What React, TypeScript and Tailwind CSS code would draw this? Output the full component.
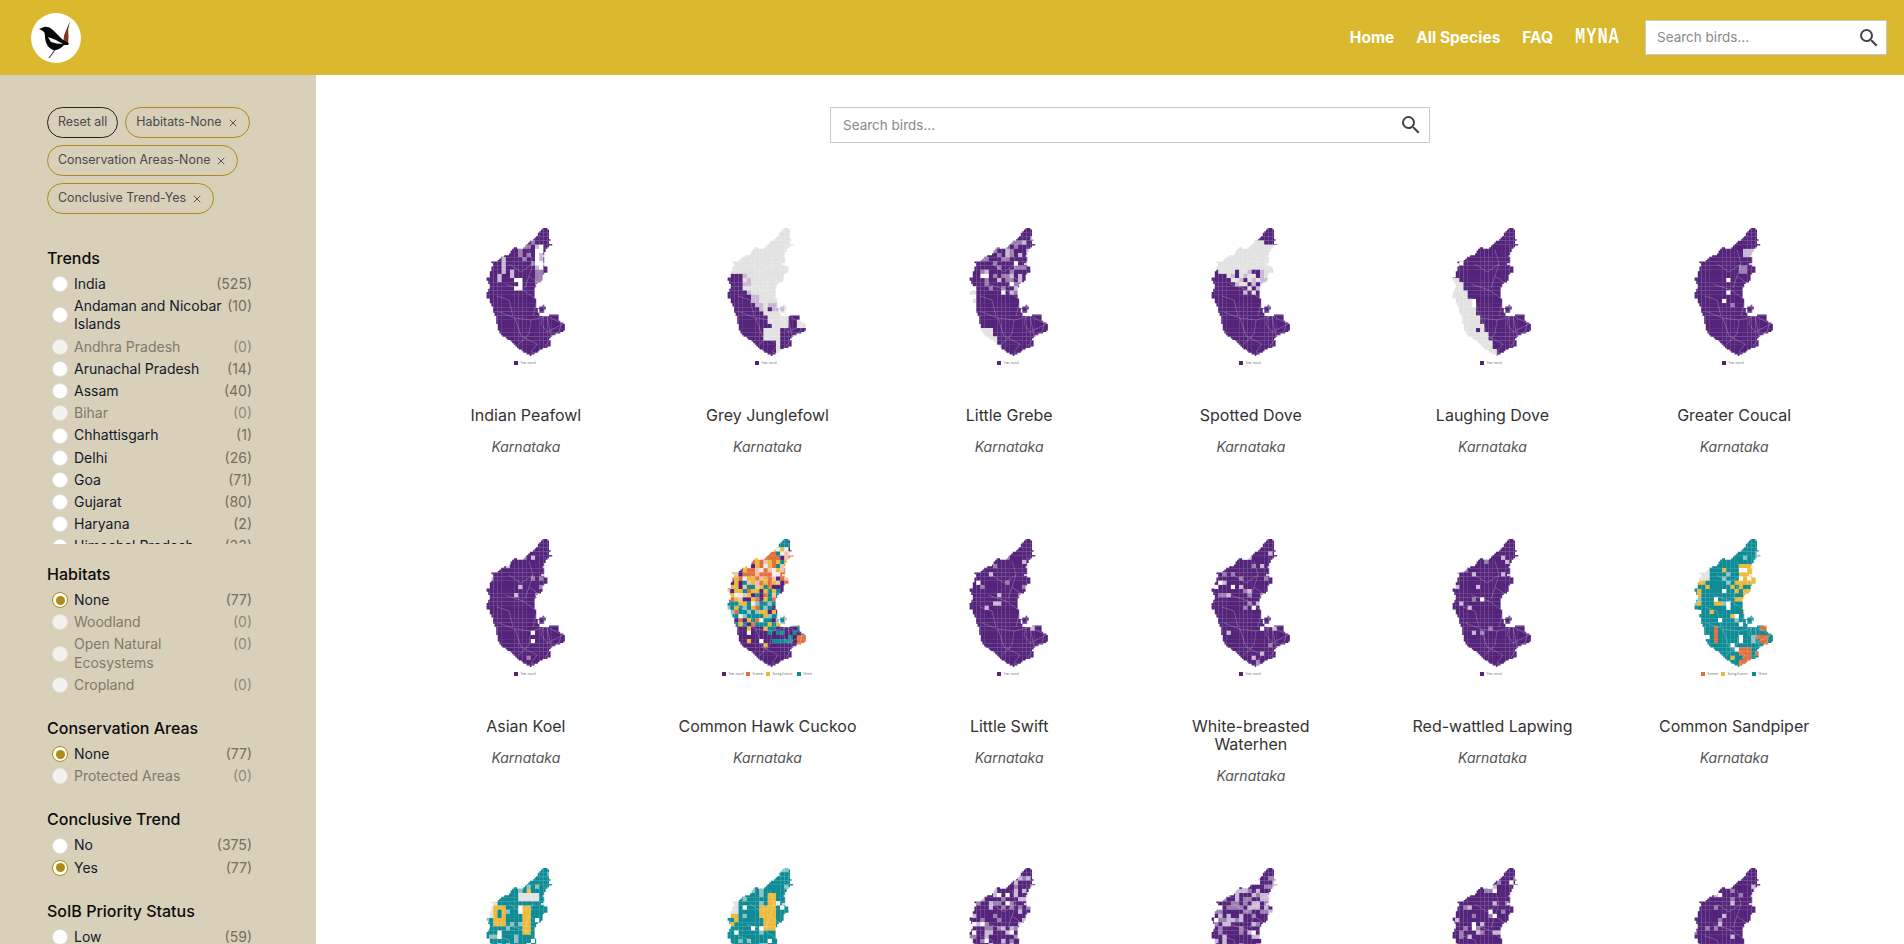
import React from "react";
import { X } from "lucide-react";
import { MdSearch } from "react-icons/md";

const CELL = 4.17;
const RAW_OUTLINE: [number, number][] = [
  [250, 55], [262, 58], [268, 70], [264, 80], [270, 92], [266, 100], [275, 108], [262, 112], [255, 125], [250, 140], [255, 158], [245, 165],
  [265, 175], [262, 188], [250, 195], [245, 215], [232, 225], [222, 245], [228, 280], [232, 305], [240, 318], [262, 320], [280, 310], [295, 318],
  [298, 335], [318, 350], [310, 368], [295, 372], [280, 378], [268, 390], [274, 408], [250, 418], [235, 425], [215, 438], [195, 428], [175, 415],
  [160, 400], [140, 385], [125, 375], [115, 360], [108, 325], [100, 300], [90, 270], [78, 258], [85, 240], [90, 225], [78, 208], [90, 195],
  [92, 180], [100, 165], [92, 158], [112, 155], [122, 142], [145, 135], [160, 112], [185, 118], [205, 100], [225, 85], [235, 68],
];
const RAW_ISLAND: [number, number][] = [[235, 295], [250, 285], [258, 295], [250, 312], [238, 305]];

// The outline is stepped on a fine grid, as the district raster in the picture is.
function stepped(p: [number, number][]) {
  const g = 1.6;
  const snap = (n: number) => (Math.round(n / g) * g).toFixed(1);
  const out: string[] = [];
  let lastX = "";
  let lastY = "";
  p.forEach(([ax, ay], i) => {
    const [bx, by] = p[(i + 1) % p.length];
    const x0 = (ax - 75) / 3;
    const y0 = (ay - 55) / 3;
    const x1 = (bx - 75) / 3;
    const y1 = (by - 55) / 3;
    const n = Math.max(1, Math.ceil(Math.hypot(x1 - x0, y1 - y0) / g));
    for (let k = 0; k < n; k++) {
      const x = snap(x0 + ((x1 - x0) * k) / n);
      const y = snap(y0 + ((y1 - y0) * k) / n);
      if (lastY !== "") out.push(`${x},${lastY}`);
      out.push(`${x},${y}`);
      lastX = x;
      lastY = y;
    }
  });
  return lastX ? out.join(" ") : "";
}
const OUTLINE = stepped(RAW_OUTLINE);
const ISLAND = stepped(RAW_ISLAND);

const C = { purple: "#54237a", orange: "#e2703f", yellow: "#ebba3c", teal: "#0e8b94", grey: "#e2e2e2", light: "#c9b9d6", mid: "#9a7fb0", white: "#ffffff", lteal: "#8cc3c7", lorange: "#f1c2ab" };
type Kind = "purple" | "orange" | "yellow" | "teal";

function rnd(seed: number, c: number, r: number) {
  const x = Math.sin(seed * 91.7 + c * 12.9898 + r * 78.233) * 43758.5453;
  return x - Math.floor(x);
}

type Rule = (c: number, r: number, v: number, w: number) => string;
const faded = (v: number) => (v < 0.15 ? C.white : v < 0.6 ? C.light : C.mid);
const inBox = (c: number, r: number, c0: number, c1: number, r0: number, r1: number) => c >= c0 && c <= c1 && r >= r0 && r <= r1;

const mostly = (density: number, top = 17): Rule => (c, r, v, w) => {
  if (r < top && r > 1 && v < density) return faded(w);
  if (r >= top && v < density * 0.12) return faded(w);
  return C.purple;
};
const peafowl: Rule = (c, r, v) => {
  if (inBox(c, r, 12, 13, 4, 9)) return v < 0.6 ? C.white : C.light;
  if (inBox(c, r, 4, 4, 7, 10)) return C.light;
  if (inBox(c, r, 7, 8, 12, 14)) return c === 7 && r === 13 ? C.purple : C.white;
  if (inBox(c, r, 12, 13, 10, 13)) return C.mid;
  if (inBox(c, r, 3, 3, 11, 12) || inBox(c, r, 6, 6, 10, 11)) return C.light;
  if (inBox(c, r, 8, 11, 3, 8) && v < 0.3) return C.mid;
  return C.purple;
};
const junglefowl: Rule = (c, r, v) => {
  if (r < 11) return C.grey;
  if (c === 10 && r === 19) return C.purple;
  if (inBox(c, r, 13, 19, 21, 28)) {
    if (inBox(c, r, 14, 14, 21, 23) || inBox(c, r, 17, 19, 22, 23) || (c === 13 && r < 24)) return C.grey;
    return C.purple;
  }
  const edge = r < 15 ? 4 : r < 18 ? 5 + (r - 15) * 0.5 : r < 20 ? 7 + (r - 18) : r < 24 ? 9 + (r - 20) * 0.5 : r < 27 ? 9 : 12;
  if (c < edge) return C.purple;
  if (c < edge + 2 && r < 20) return v < 0.6 ? C.light : C.grey;
  if (inBox(c, r, 10, 13, 18, 19)) return C.light;
  return C.grey;
};
const grebe: Rule = (c, r, v, w) => {
  if (r >= 24 && r <= 29 && c <= 5 + (r - 24) * 0.5) return C.grey;
  if (r >= 14 && r <= 20 && c <= 1) return r % 2 ? C.grey : C.white;
  if (r > 1 && r < 16 && c >= 3 && v < 0.3) return faded(w);
  return C.purple;
};
const spotted: Rule = (c, r, v) => {
  if (r < 3) return C.purple;
  if (r < 4) return c >= 13 ? C.purple : C.grey;
  if (r < 10) return C.grey;
  const edge = r < 16 ? 2 + (r - 10) * 1.2 : 20;
  if (c < edge) return C.purple;
  if (r < 16) return v < 0.22 ? C.purple : v < 0.4 ? C.light : C.grey;
  if (r === 16) return c < 12 ? (v < 0.4 ? C.purple : C.grey) : C.purple;
  if (c === 7 && r === 18) return C.light;
  return C.purple;
};
const laughing: Rule = (c, r) => {
  if (c === 2 && r === 8) return C.white;
  if (c === 6 && r === 24) return C.purple;
  if (c === 5 && (r === 17 || r === 18)) return C.white;
  if (r >= 12 && c < 2 + (r - 12) * 0.5) return C.grey;
  return C.purple;
};
const coucal: Rule = (c, r) => {
  if (inBox(c, r, 12, 14, 5, 6)) return C.light;
  if (inBox(c, r, 11, 12, 9, 10)) return C.mid;
  if (c === 8 && (r === 12 || r === 15)) return C.white;
  if (c === 7 && r === 17) return C.white;
  if (c === 9 && r === 18) return C.mid;
  return C.purple;
};
const hawk: Rule = (c, r, v) => {
  if (r >= 21) {
    if (inBox(c, r, 17, 20, 23, 25)) return C.orange;
    if (c > 9 && r < 25 && v < 0.45) return C.teal;
    if (c <= 9 && r < 26 && v < 0.25) return v < 0.12 ? C.yellow : C.white;
    return C.purple;
  }
  if (r < 2) return v < 0.6 ? C.teal : C.purple;
  if (r < 11) return v < 0.42 ? C.orange : v < 0.62 ? C.yellow : v < 0.7 ? C.purple : v < 0.85 ? C.lorange : v < 0.9 ? C.teal : "#eeeeee";
  if (r < 15) return v < 0.2 ? C.teal : v < 0.4 ? C.purple : v < 0.62 ? C.yellow : v < 0.8 ? C.orange : v < 0.9 ? C.lorange : "#eeeeee";
  return v < 0.4 ? C.teal : v < 0.58 ? C.purple : v < 0.7 ? C.yellow : v < 0.76 ? C.orange : v < 0.9 ? C.lteal : "#eeeeee";
};
const sandpiper: Rule = (c, r, v) => {
  if (r < 6) return v < 0.15 ? C.lteal : C.teal;
  if (inBox(c, r, 11, 14, 6, 10)) return v < 0.18 ? C.white : C.yellow;
  if (inBox(c, r, 10, 14, 10, 14)) return v < 0.12 ? C.orange : v < 0.8 ? C.yellow : C.teal;
  if (inBox(c, r, 12, 14, 14, 17) && v < 0.7) return C.yellow;
  if (inBox(c, r, 5, 5, 21, 24)) return C.orange;
  if (inBox(c, r, 11, 13, 26, 30) && v < 0.85) return C.orange;
  if (inBox(c, r, 15, 17, 21, 27) && v < 0.65) return C.orange;
  if (inBox(c, r, 1, 3, 10, 13) && v < 0.5) return C.yellow;
  if (inBox(c, r, 0, 3, 7, 9)) return C.grey;
  if (v < 0.05) return C.yellow;
  if (v < 0.1) return C.white;
  if (v < 0.14) return C.lteal;
  return C.teal;
};
const tealYellow = (seed: number): Rule => (c, r, v) => {
  if (r < 6) return v < 0.06 ? C.yellow : v < 0.14 ? C.lteal : C.teal;
  if (seed === 1) {
    if (inBox(c, r, 2, 4, 9, 13)) return (c === 3 && (r === 10 || r === 11)) ? C.teal : C.yellow;
    if (inBox(c, r, 9, 10, 9, 15)) return C.yellow;
    if (inBox(c, r, 8, 12, 6, 7)) return C.grey;
  } else {
    if (inBox(c, r, 8, 11, 9, 11) || inBox(c, r, 9, 11, 12, 14) || inBox(c, r, 10, 11, 6, 8)) return C.yellow;
    if (inBox(c, r, 1, 2, 11, 13) && v < 0.6) return C.yellow;
  }
  if (r < 12 && c < 3) return C.grey;
  if (v < 0.06) return C.white;
  if (v < 0.17) return C.lteal;
  return C.teal;
};

const RULES: Rule[] = [
  peafowl, junglefowl, grebe, spotted, laughing, coucal,
  mostly(0.07), hawk, mostly(0.08), mostly(0.13), mostly(0.08), sandpiper,
  tealYellow(1), tealYellow(2), mostly(0.34, 24), mostly(0.38, 24), mostly(0.18), mostly(0.08),
];

const ONE: Kind[] = ["purple"];
const FOUR: Kind[] = ["purple", "orange", "yellow", "teal"];
const THREE: Kind[] = ["orange", "yellow", "teal"];
const LEGEND: Kind[][] = [ONE, ONE, ONE, ONE, ONE, ONE, ONE, FOUR, ONE, ONE, ONE, THREE, THREE, THREE, ONE, ONE, ONE, ONE];
const LEGEND_NAME: Record<Kind, [string, number]> = {
  purple: ["Year-round", 24],
  orange: ["Summer", 20],
  yellow: ["Spring/Autumn", 31],
  teal: ["Winter", 15],
};

const DISTRICTS = [
  "M44 48 L55 56 L70 52 L84 60",
  "M20 56 L38 62 L52 72 L48 88",
  "M14 84 L30 90 L46 92 L62 88 L78 96",
  "M30 90 L36 108 L52 116",
  "M62 88 L66 108 L80 112",
  "M44 22 L48 36 L44 48 L40 60",
  "M60 18 L62 34 L70 52",
  "M24 36 L36 44 L48 36",
  "M68 108 L60 118 L66 126",
  "M52 72 L60 80 L56 96 L62 104",
  "M46 92 L44 106 L34 116",
  "M78 96 L70 100 L62 104",
  "M12 68 L24 72 L28 88",
  "M52 116 L46 124 L56 128",
  "M66 108 L74 104 L76 96",
];

function KMap({ index }: { index: number }) {
  const rule = RULES[index];
  const seed = index + 1;
  const cells: React.ReactNode[] = [];
  for (let r = 0; r < 31; r++) {
    for (let c = 0; c < 20; c++) {
      const fill = rule(c, r, rnd(seed, c, r), rnd(seed + 40, c, r));
      cells.push(<rect key={`${r}-${c}`} x={c * CELL} y={r * CELL} width={CELL + 0.15} height={CELL + 0.15} fill={fill} />);
    }
  }
  const items = LEGEND[index];
  const total = items.reduce((s, k) => s + LEGEND_NAME[k][1], 0);
  let lx = 41 - total / 2;
  const id = `km${index}`;
  return (
    <svg width="120" height="146" viewBox="-19 0 120 146" className="block blur-[0.3px]">
      <defs>
        <clipPath id={id}>
          <polygon points={OUTLINE} />
          <polygon points={ISLAND} />
        </clipPath>
      </defs>
      <g clipPath={`url(#${id})`}>
        {cells}
        {DISTRICTS.map((d) => (
          <path key={d} d={d} fill="none" stroke="#ffffff" strokeOpacity="0.38" strokeWidth="0.6" />
        ))}
      </g>
      {items.map((k) => {
        const x = lx;
        lx += LEGEND_NAME[k][1];
        return (
          <g key={k}>
            <rect x={x} y={133} width={4} height={4} fill={C[k]} />
            <text x={x + 6.5} y={136.4} fontSize="2.8" fill="#777777">{LEGEND_NAME[k][0]}</text>
          </g>
        );
      })}
    </svg>
  );
}

const BIRDS = [
  "Indian Peafowl", "Grey Junglefowl", "Little Grebe", "Spotted Dove", "Laughing Dove", "Greater Coucal",
  "Asian Koel", "Common Hawk Cuckoo", "Little Swift", "White-breasted Waterhen", "Red-wattled Lapwing", "Common Sandpiper",
  "Common Kingfisher", "Wood Sandpiper", "Black Drongo", "Ashy Drongo", "Jungle Crow", "House Crow",
];

function Radio({ state }: { state: "off" | "on" | "disabled" }) {
  if (state === "on")
    return (
      <span className="flex h-4 w-4 shrink-0 items-center justify-center rounded-full border border-[#ad8b16] bg-white">
        <span className="h-[9px] w-[9px] rounded-full bg-[#ad8b16]" />
      </span>
    );
  return <span className={state === "off" ? "h-4 w-4 shrink-0 rounded-full border border-[#dfe1ea] bg-white" : "h-4 w-4 shrink-0 rounded-full border border-[#e6e3da] bg-[#f3f1eb]"} />;
}

type Opt = { label: React.ReactNode; n: number; on?: boolean };
function Option({ label, n, on }: Opt) {
  const disabled = n === 0;
  return (
    <div className={`flex items-center py-[2px] text-[14px] leading-[18.2px] ${disabled ? "text-[#7f7a6c]" : "text-[#141a2a]"}`}>
      <Radio state={on ? "on" : disabled ? "disabled" : "off"} />
      <span className="ml-[6px] flex-1">{label}</span>
      <span className={`self-start ${disabled ? "text-[#8f897a]" : "text-[#726e62]"}`}>({n})</span>
    </div>
  );
}

function Group({ title, opts, className }: { title: string; opts: Opt[]; className: string }) {
  return (
    <section className={className}>
      <h3 className="mb-[5px] text-[16px] leading-[20px] font-medium text-[#0c0c0c]">{title}</h3>
      <div className="pl-[5px]">{opts.map((o, i) => <Option key={i} {...o} />)}</div>
    </section>
  );
}

function Chip({ children, dark }: { children: React.ReactNode; dark?: boolean }) {
  return (
    <span className={`inline-flex h-[31px] items-center rounded-full border px-[10px] text-[12.4px] whitespace-nowrap text-[#4a4a4a] ${dark ? "border-[#222222]" : "border-[#ad8b16]"}`}>
      {children}
    </span>
  );
}

function Removable({ text }: { text: string }) {
  return (
    <Chip>
      {text}
      <X size={12} strokeWidth={1.8} className="ml-[5px]" />
    </Chip>
  );
}

function Sidebar() {
  return (
    <aside className="h-[869px] w-[316px] shrink-0 overflow-hidden bg-[#d8d0b8] pt-[32px] pr-[64px] pl-[47px]">
      <div className="-mr-[10px] flex flex-wrap gap-[7px]">
        <Chip dark>Reset all</Chip>
        <Removable text="Habitats-None" />
        <Removable text="Conservation Areas-None" />
        <Removable text="Conclusive Trend-Yes" />
      </div>
      <section className="mt-[34px]">
        <h3 className="mb-[5px] text-[16px] leading-[20px] font-medium text-[#0c0c0c]">Trends</h3>
        <div className="h-[271px] overflow-hidden pl-[5px]">
          <Option label="India" n={525} />
          <Option label="Andaman and Nicobar Islands" n={10} />
          <Option label="Andhra Pradesh" n={0} />
          <Option label="Arunachal Pradesh" n={14} />
          <Option label="Assam" n={40} />
          <Option label="Bihar" n={0} />
          <Option label="Chhattisgarh" n={1} />
          <Option label="Delhi" n={26} />
          <Option label="Goa" n={71} />
          <Option label="Gujarat" n={80} />
          <Option label="Haryana" n={2} />
          <Option label="Himachal Pradesh" n={33} />
        </div>
      </section>
      <Group className="mt-[20px]" title="Habitats" opts={[
        { label: "None", n: 77, on: true },
        { label: "Woodland", n: 0 },
        { label: "Open Natural Ecosystems", n: 0 },
        { label: "Cropland", n: 0 },
      ]} />
      <Group className="mt-[22px]" title="Conservation Areas" opts={[
        { label: "None", n: 77, on: true },
        { label: "Protected Areas", n: 0 },
      ]} />
      <Group className="mt-[22px]" title="Conclusive Trend" opts={[
        { label: "No", n: 375 },
        { label: "Yes", n: 77, on: true },
      ]} />
      <Group className="mt-[22px]" title="SoIB Priority Status" opts={[{ label: "Low", n: 59 }]} />
    </aside>
  );
}

function Logo() {
  return (
    <svg width="50" height="50" viewBox="0 0 50 50" className="block shrink-0 rounded-full bg-white">
      <path d="M25 35 L21 41 L18 45" stroke="#444444" strokeWidth="1.2" fill="none" />
      <path d="M39 8 L33 23 L35 25 Z" fill="#1c1210" />
      <path d="M37 15 Q38 24 37 31 L32 28 Q33 22 37 15 Z" fill="#8b3318" />
      <path d="M8 16 L13 14 Q18 13 22 17 Q27 22 32 27 L38 30 L37 32 L33 32 Q28 38 22 37 Q15 34 14 25 Q14 20 13 19 Q11 17 8 16 Z" fill="#080808" />
      <path d="M17 24 Q24 26 32 31 Q25 31 20 29 Z" fill="#ffffff" />
    </svg>
  );
}

function Header() {
  return (
    <header className="flex h-[75px] items-center bg-[#dbb92e] pr-[17px] pl-[31px]">
      <Logo />
      <nav className="ml-auto flex items-center gap-[22px] text-[15.5px] font-bold text-white">
        <span>Home</span>
        <span>All Species</span>
        <span>FAQ</span>
        <span className="w-[46px] scale-y-125 font-['Liberation_Mono',monospace] text-[17px] tracking-[1px]">MYNA</span>
      </nav>
      <div className="ml-[24px] flex h-[35px] w-[242px] items-center justify-between border border-[#c8c8c8] bg-white pr-[5px] pl-[11px]">
        <span className="text-[13.5px] text-[#8a8a8a]">Search birds...</span>
        <MdSearch size={24} className="text-[#444444]" />
      </div>
    </header>
  );
}

function Card({ name, index }: { name: string; index: number }) {
  return (
    <article className="flex flex-col items-center px-[28px] pb-[83px] text-center">
      <KMap index={index} />
      <h2 className="mt-[32px] text-[16px] leading-[18px] font-normal text-[#333333]">{name}</h2>
      <p className="mt-[14px] text-[14px] leading-[18px] text-[#555555] italic">Karnataka</p>
    </article>
  );
}

export default function App() {
  return (
    <div className="h-screen overflow-hidden bg-white font-['Inter','Noto_Sans',sans-serif]">
      <Header />
      <div className="flex">
        <Sidebar />
        <main className="min-w-0 flex-1 pr-[49px] pl-[89px]">
          <div className="mx-auto mt-[32px] flex h-[36px] w-[600px] items-center justify-between border border-[#c8c8c8] pr-[6px] pl-[12px]">
            <span className="text-[13.5px] text-[#8a8a8a]">Search birds...</span>
            <MdSearch size={24} className="text-[#444444]" />
          </div>
          <div className="mt-[85px] grid grid-cols-6">
            {BIRDS.map((b, i) => <Card key={b} name={b} index={i} />)}
          </div>
        </main>
      </div>
    </div>
  );
}
